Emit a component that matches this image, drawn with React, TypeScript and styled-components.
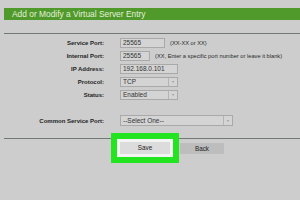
import React from 'react';
import styled, { createGlobalStyle } from 'styled-components';

const GlobalStyle = createGlobalStyle`
  html, body {
    margin: 0;
    padding: 0;
    background: #cdcdcd;
  }
  body {
    font-family: "Liberation Sans", Arial, sans-serif;
    width: 300px;
    height: 200px;
    overflow: hidden;
  }
`;

const Page = styled.div`
  padding: 8px 0 0 4px;
`;

const Header = styled.div`
  height: 12px;
  line-height: 12px;
  background: #4f9a2b;
  color: #e6eedd;
  font-size: 8.4px;
  padding-left: 8px;
`;

const Divider = styled.div<{ $top: number }>`
  margin-top: ${({ $top }) => $top}px;
  height: 1px;
  background: #6e7a73;
`;

const Form = styled.div`
  margin-top: 4px;
  display: flex;
  flex-direction: column;
  gap: 3px;
`;

const Row = styled.div<{ $top?: number }>`
  display: grid;
  grid-template-columns: 100px auto;
  column-gap: 16px;
  align-items: center;
  margin-top: ${({ $top }) => $top ?? 0}px;
`;

const Label = styled.span`
  text-align: right;
  font-size: 6px;
  font-weight: bold;
  color: #1e1e1e;
`;

const Field = styled.div`
  display: flex;
  align-items: center;
  gap: 5px;
`;

const Input = styled.div<{ $w: number }>`
  box-sizing: border-box;
  width: ${({ $w }) => $w}px;
  height: 10px;
  border: 1px solid #a9a9a9;
  background: #d4d4d4;
  font-size: 6.5px;
  line-height: 8px;
  padding-left: 2px;
  color: #333;
  white-space: nowrap;
`;

const Select = styled(Input)<{ $h?: number }>`
  display: flex;
  justify-content: space-between;
  height: ${({ $h }) => $h ?? 10}px;
  line-height: ${({ $h }) => ($h ?? 10) - 2}px;
  padding-right: 0;
`;

const Arrow = styled.span`
  width: 8px;
  border-left: 1px solid #b5b5b5;
  display: flex;
  align-items: center;
  justify-content: center;
  color: #9a9a9a;
  font-size: 4px;
`;

const Hint = styled.span`
  font-size: 5.7px;
  color: #2a2a2a;
  white-space: nowrap;
`;

const Buttons = styled.div`
  margin-top: 3px;
  padding-left: 116px;
  display: flex;
  align-items: center;
  gap: 10px;
`;

const Button = styled.div<{ $w: number; $highlight?: boolean }>`
  width: ${({ $w }) => $w}px;
  height: ${({ $highlight }) => ($highlight ? 12 : 11)}px;
  line-height: ${({ $highlight }) => ($highlight ? 12 : 11)}px;
  text-align: center;
  font-size: 6.3px;
  color: #222;
  background: ${({ $highlight }) => ($highlight ? '#dcdcdc' : '#bdbdbd')};
  box-shadow: ${({ $highlight }) =>
    $highlight ? '0 0 0 3px #f4f4f4, 0 0 0 9px #22e51f' : 'none'};
`;

const DropArrow = () => <Arrow>▾</Arrow>;

export default function App() {
  return (
    <>
      <GlobalStyle />
      <Page>
        <Header>Add or Modify a Virtual Server Entry</Header>
        <Divider $top={13} />
        <Form>
          <Row>
            <Label>Service Port:</Label>
            <Field>
              <Input $w={45}>25565</Input>
              <Hint>(XX-XX or XX)</Hint>
            </Field>
          </Row>
          <Row>
            <Label>Internal Port:</Label>
            <Field>
              <Input $w={30}>25565</Input>
              <Hint>(XX, Enter a specific port number or leave it blank)</Hint>
            </Field>
          </Row>
          <Row>
            <Label>IP Address:</Label>
            <Field>
              <Input $w={58}>192.168.0.101</Input>
            </Field>
          </Row>
          <Row>
            <Label>Protocol:</Label>
            <Field>
              <Select $w={58}>
                TCP
                <DropArrow />
              </Select>
            </Field>
          </Row>
          <Row>
            <Label>Status:</Label>
            <Field>
              <Select $w={58}>
                Enabled
                <DropArrow />
              </Select>
            </Field>
          </Row>
          <Row $top={12}>
            <Label>Common Service Port:</Label>
            <Field>
              <Select $w={113} $h={11}>
                --Select One--
                <DropArrow />
              </Select>
            </Field>
          </Row>
        </Form>
        <Divider $top={12} />
        <Buttons>
          <Button $w={50} $highlight>
            Save
          </Button>
          <Button $w={44}>Back</Button>
        </Buttons>
      </Page>
    </>
  );
}
